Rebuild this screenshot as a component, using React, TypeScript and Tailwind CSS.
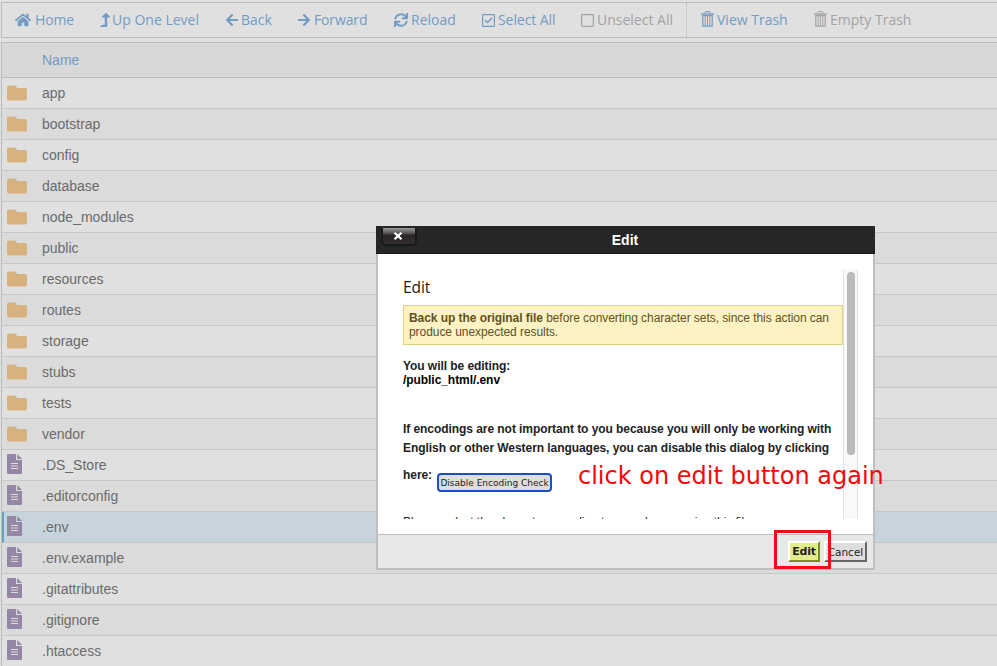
import React from "react";
import { FaHome, FaLevelUpAlt, FaArrowLeft, FaArrowRight, FaSync } from "react-icons/fa";

const files = [
  "app", "bootstrap", "config", "database", "node_modules", "public", "resources",
  "routes", "storage", "stubs", "tests", "vendor", ".DS_Store", ".editorconfig",
  ".env", ".env.example", ".gitattributes", ".gitignore", ".htaccess",
];

const FOLDER_COUNT = 12;
const SELECTED = ".env";

function rowStyle(name: string, index: number) {
  if (name === SELECTED) return "border-l-2 border-l-[#5fa4c4] bg-[#c8d4dc] pl-[3px]";
  return index % 2 ? "bg-[#dbdbdb] pl-[5px]" : "bg-[#e0e0e0] pl-[5px]";
}

function Folder() {
  return (
    <svg width="20" height="16" viewBox="0 0 20 16" fill="#d7b27f" className="mb-px">
      <path d="M1.8 0.5H8L10.3 3H18.2Q20 3 20 4.8V13.7Q20 15.5 18.2 15.5H1.8Q0 15.5 0 13.7V2.3Q0 0.5 1.8 0.5Z" />
    </svg>
  );
}

function Doc() {
  return (
    <svg width="15" height="20" viewBox="0 0 15 20" className="mb-[2px]">
      <path fill="#9686a5" d="M1 0H9V6H15V19Q15 20 14 20H1Q0 20 0 19V1Q0 0 1 0ZM10.2 0L15 5H10.2Z" />
      <path stroke="#dcdcdc" strokeWidth="1" d="M4 9.5H11M4 12H11M4 14.5H11" />
    </svg>
  );
}

function Trash() {
  return (
    <svg width="13" height="16" viewBox="0 0 13 16" fill="none" stroke="currentColor" className="-mt-[2px]">
      <path d="M4 2.5V1.2Q4 .6 4.6 .6H8.4Q9 .6 9 1.2V2.5" />
      <path strokeWidth="1.4" d="M0 3H13" />
      <path strokeWidth="1.2" d="M1.8 4.6V15.2H11.2V4.6Z" />
      <path strokeWidth="0.9" d="M4.2 5V15M6.5 5V15M8.8 5V15" />
    </svg>
  );
}

function Box({ checked }: { checked?: boolean }) {
  return (
    <svg width="13" height="13" viewBox="0 0 13 13" fill="none" stroke="currentColor">
      <rect x="0.6" y="0.6" width="11.8" height="11.8" rx="0.8" strokeWidth="1.2" />
      {checked && <path strokeWidth="1.4" d="M3 6.2L5.5 8.6L10 4" />}
    </svg>
  );
}

function Tool({ icon, label, className }: { icon: React.ReactNode; label: string; className: string }) {
  return (
    <div className={`flex shrink-0 items-center whitespace-nowrap ${className}`}>
      {icon}
      <span className="pb-[2px]">{label}</span>
    </div>
  );
}

export default function App() {
  return (
    <div className="relative h-[666px] w-[997px] overflow-hidden bg-[#e0e0e0] pl-px pt-[2px] font-['Liberation_Sans',Arial,sans-serif]">
      <div className="flex h-9 w-[1000px] border border-[#bcbcbc] font-['Open_Sans',sans-serif] text-[14px] text-[#739bc3]">
        <Tool className="ml-[13px] w-[85px] gap-[4px] tracking-[-0.01em]" icon={<FaHome size={16} />} label="Home" />
        <Tool className="w-[125px] gap-[2px]" icon={<FaLevelUpAlt className="h-[14px] w-[10px]" preserveAspectRatio="none" />} label="Up One Level" />
        <Tool className="w-[72px] gap-[2px]" icon={<FaArrowLeft size={14} />} label="Back" />
        <Tool className="w-[97px] gap-[3px] tracking-[-0.01em]" icon={<FaArrowRight size={14} />} label="Forward" />
        <Tool className="w-[88px] gap-[3px]" icon={<FaSync size={14} />} label="Reload" />
        <Tool className="w-[99px] gap-[3px] tracking-[-0.005em]" icon={<Box checked />} label="Select All" />
        <Tool className="w-[106px] gap-[3px] border-r border-dotted border-[#b8b8b8] text-[#a3a3a3]" icon={<Box />} label="Unselect All" />
        <Tool className="ml-[14px] w-[113px] gap-[3px]" icon={<Trash />} label="View Trash" />
        <Tool className="gap-[3px] text-[#a3a3a3]" icon={<Trash />} label="Empty Trash" />
      </div>

      <div className="mt-1 w-[1000px] border-l border-t border-[#bcbcbc] text-[14px] text-[#6b6b6b]">
        <div className="flex h-[35px] items-center border-b border-[#bcbcbc] bg-[#d8d8d8] pl-10 text-[#739bc3]">Name</div>
        {files.map((name, i) => (
          <div key={name} className={`flex h-[31px] items-center border-b border-[#c6c6c6] ${rowStyle(name, i)}`}>
            <div className="flex w-[35px]">{i < FOLDER_COUNT ? <Folder /> : <Doc />}</div>
            <span>{name}</span>
          </div>
        ))}
      </div>

      <div className="absolute left-[376px] top-[226px] flex h-[344px] w-[499px] flex-col">
        <div className="relative flex h-7 shrink-0 items-center justify-center border-b border-[#171717] bg-[#262626] pr-px pt-[2px] text-[14px] font-bold text-white">
          Edit
          <div className="absolute left-[5px] top-[2px] flex h-[18px] w-9 items-center justify-center rounded-b-[5px] border-2 border-t-0 border-[#171b1d] bg-[linear-gradient(#9a9a9a_0px,#4c4848_6px,#292525_7px,#342f2f_16px)]">
            <svg width="10" height="8" viewBox="0 0 10 8" className="-ml-[2px]">
              <path d="M1.5 .8L8.5 7.2M8.5 .8L1.5 7.2" stroke="#fff" strokeWidth="2.2" />
            </svg>
          </div>
        </div>

        <div className="flex min-h-0 flex-1 flex-col border-2 border-t-0 border-[#bfbfbf] bg-white">
          <div className="ml-[25px] mt-[15px] flex h-[250px] w-[455px] shrink-0 overflow-hidden text-[12px] leading-[14px] text-[#222]">
            <div className="w-[440px] shrink-0 whitespace-nowrap tracking-[-0.06px]">
              <h1 className="pt-[8px] font-['Open_Sans',sans-serif] text-[15.5px] leading-[20px]">Edit</h1>
              <div className="mt-[8px] h-10 border border-[#dfd67b] bg-[#fdf3c2] px-[5px] pt-[5px] text-[#5f5025]">
                <b>Back up the original file</b> before converting character sets, since this action can
                <br />
                produce unexpected results.
              </div>
              <p className="mt-[14px] font-bold">You will be editing:</p>
              <p className="font-bold text-black">/public_html/.env</p>
              <p className="mt-[33px] font-bold leading-[19px]">
                If encodings are not important to you because you will only be working with
                <br />
                English or other Western languages, you can disable this dialog by clicking
              </p>
              <div className="flex font-bold">
                <span className="mt-[10px]">here:</span>
                <button className="ml-[5px] mt-[15px] flex h-[19px] w-[115px] items-center justify-center rounded-[4px] border-2 border-[#1d4fc4] bg-[#dedede] pt-px font-['DejaVu_Sans',sans-serif] text-[9px] font-normal tracking-normal">
                  Disable Encoding Check
                </button>
              </div>
              <p className="mt-[23px]">Please select the character encoding to use when opening this file:</p>
            </div>
            <div className="h-full w-[15px] border-x border-[#e3e3e3] bg-[#f9f9f9] pl-[3px] pt-[3px]">
              <div className="h-[183px] w-2 rounded-full bg-[#bababa]" />
            </div>
          </div>
          <div className="mt-[15px] flex flex-1 justify-end gap-1 border-t border-[#bfbfbf] bg-[#e8e8e8] pr-[6px] pt-[6px] font-['DejaVu_Sans',sans-serif] text-[11px] text-[#222]">
            <button className="flex h-[21px] w-8 items-center justify-center border-2 border-b-[#7d8b26] border-l-white border-r-[#7d8b26] border-t-white bg-[#e2ed8b] pt-[2px] font-bold tracking-[-0.02em]">Edit</button>
            <button className="flex h-[21px] w-[43px] items-center justify-center border-2 border-b-[#666] border-l-white border-r-[#666] border-t-white bg-[#dedede] pt-[2px] text-[10.5px]">Cancel</button>
          </div>
        </div>
      </div>

      <div className="absolute left-[774px] top-[530px] h-[39px] w-[57px] border-3 border-[#ee1010]" />
      <div className="absolute left-[578px] top-[462px] whitespace-nowrap font-['DejaVu_Sans',sans-serif] text-[24px] leading-[28px] text-[#f50808]">click on edit button again</div>
    </div>
  );
}
